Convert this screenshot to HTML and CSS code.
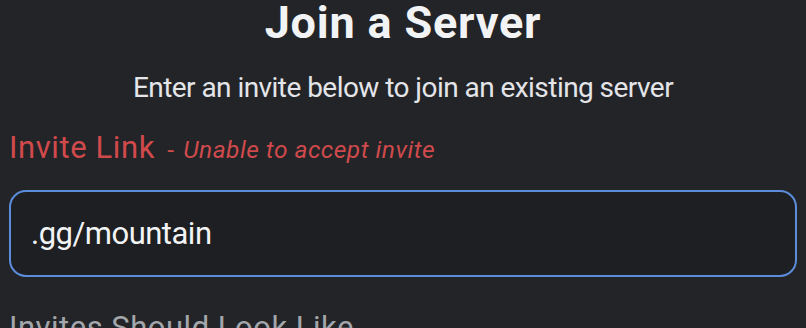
FILE: index.html
```html
<!DOCTYPE html>
<html lang="en">
<head>
<meta charset="utf-8">
<title>Join a Server</title>
<link rel="stylesheet" href="styles.css">
</head>
<body>
<main class="modal">
  <h1 class="title">Join a Server</h1>
  <p class="subtitle">Enter an invite below to join an existing server</p>
  <label class="field-label">Invite Link <span class="error"><span class="dash">-</span> Unable to accept invite</span></label>
  <div class="input">.gg/mountain</div>
  <h2 class="section-title">Invites Should Look Like</h2>
</main>
</body>
</html>
```
FILE: styles.css
```css
html, body {
  margin: 0;
  padding: 0;
  background: #232428;
  height: 100%;
  overflow: hidden;
}

body {
  font-family: Roboto, "Noto Sans", "Liberation Sans", sans-serif;
  color: #dbdee1;
}

.modal {
  display: flex;
  flex-direction: column;
  padding: 0 9px;
}

.title {
  margin: 0;
  font-size: 45px;
  line-height: 46px;
  font-weight: 700;
  letter-spacing: 0.8px;
  color: #f2f3f5;
  text-align: center;
}

.subtitle {
  margin: 25px 0 0;
  font-size: 28px;
  line-height: 34px;
  letter-spacing: -0.55px;
  color: #e3e5e8;
  text-align: center;
}

.field-label {
  margin: 24px 0 0;
  font-size: 31px;
  line-height: 38px;
  letter-spacing: 0.6px;
  color: #d04a4c;
  display: block;
}

.error {
  margin-left: 4px;
  font-size: 24.5px;
  font-style: italic;
  letter-spacing: 0.5px;
}

.dash {
  font-style: normal;
  margin-right: 2px;
}

.input {
  margin-top: 21px;
  height: 83px;
  box-sizing: content-box;
  border: 2px solid #5b8ddb;
  border-radius: 17px;
  background: #1e1f22;
  display: flex;
  align-items: center;
  padding: 0 20px;
  font-size: 31px;
  line-height: 36px;
  letter-spacing: -0.5px;
  color: #f2f3f5;
}

.section-title {
  margin: 32px 0 0;
  font-size: 31px;
  line-height: 38px;
  font-weight: 400;
  letter-spacing: 0.5px;
  color: #a3a6aa;
}
```
